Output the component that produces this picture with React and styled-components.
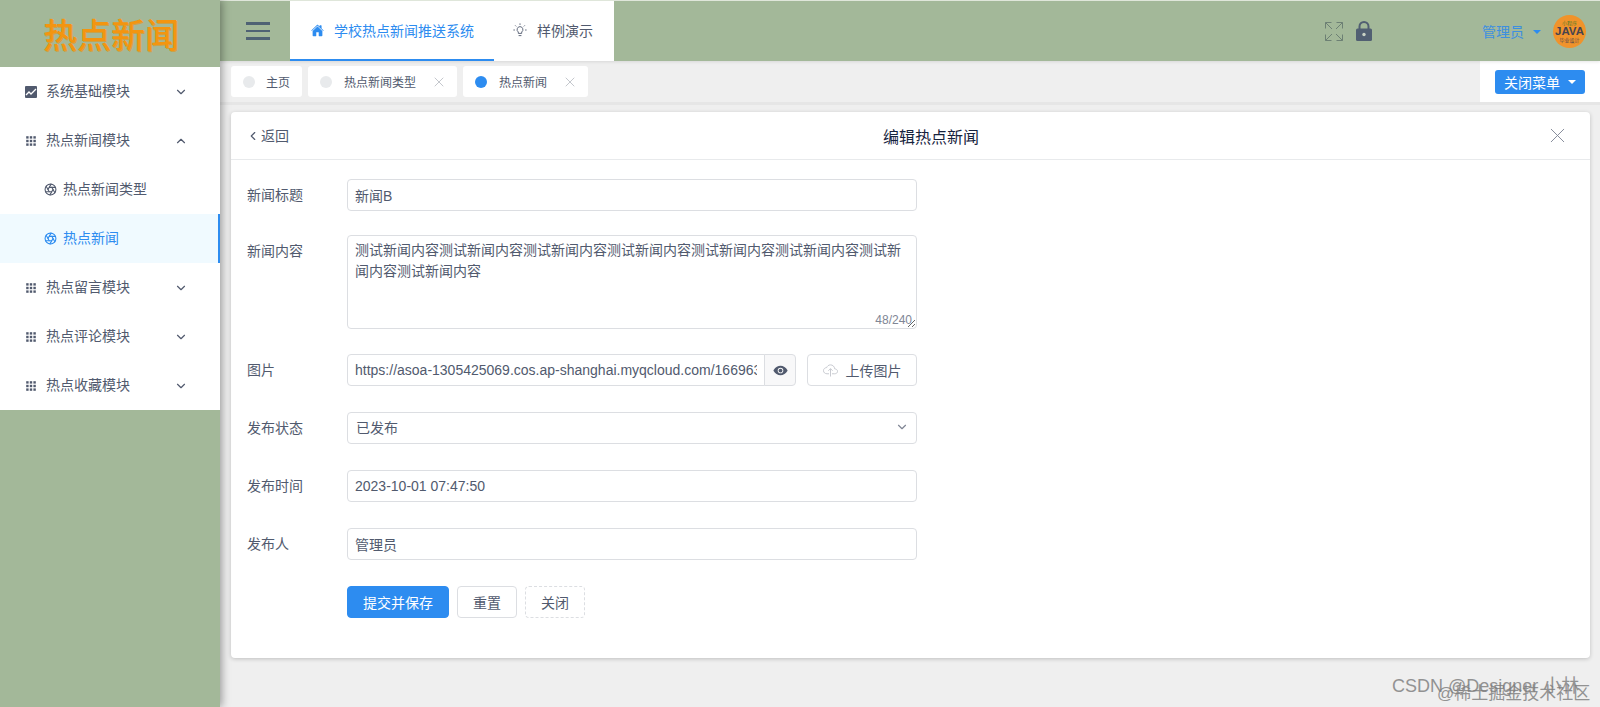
import React from 'react';
import styled, { createGlobalStyle } from 'styled-components';
import { ChevronDown, ChevronUp, ChevronLeft, X, Aperture } from 'lucide-react';
import { IoHome, IoEye, IoCloudUploadOutline } from 'react-icons/io5';

const BLUE = '#2d8cf0';
const GREEN = '#a3b899';
const TEXT = '#515a6e';
const FONT = '"Liberation Sans", "Noto Sans CJK SC", sans-serif';

const Global = createGlobalStyle`
  html, body { margin: 0; padding: 0; height: 707px; overflow: hidden; }
  body { font-family: ${FONT}; font-size: 14px; color: ${TEXT}; background: #efefef; }
  * { box-sizing: border-box; }
`;

const Page = styled.div`
  position: relative;
  display: flex;
  width: 1600px;
  height: 707px;
  overflow: hidden;
`;

const Sidebar = styled.aside`
  width: 220px;
  flex: none;
  background: ${GREEN};
  box-shadow: 2px 0 8px rgba(0, 0, 0, 0.35);
  z-index: 3;
`;

const Logo = styled.div`
  height: 67px;
  display: flex;
  align-items: center;
  justify-content: center;
  padding-left: 2px;
  font-family: "Noto Sans CJK SC", sans-serif;
  font-size: 34px;
  font-weight: 500;
  color: #f39510;
  text-shadow: 1px 1px 0 #c9a24a;
`;

const Menu = styled.nav`
  background: #fff;
`;

const MenuRow = styled.div`
  height: 49px;
  display: flex;
  align-items: center;
  padding-left: ${(p) => (p.$sub ? '44px' : '25px')};
  padding-right: 32px;
  gap: ${(p) => (p.$sub ? '6px' : '9px')};
  color: ${(p) => (p.$active ? BLUE : TEXT)};
  background: ${(p) => (p.$active ? '#f0faff' : '#fff')};
  border-right: ${(p) => (p.$active ? `2px solid ${BLUE}` : 'none')};
`;

const MenuText = styled.span`
  flex: 1;
  line-height: 20px;
  margin-top: -2px;
`;

const Main = styled.main`
  flex: 1;
  min-width: 0;
  display: flex;
  flex-direction: column;
`;

const TopBar = styled.header`
  height: 61px;
  flex: none;
  display: flex;
  background: ${GREEN};
  border-top: 1px solid #dfe6da;
  padding-right: 14px;
  z-index: 2;
  box-shadow: 0 1px 3px rgba(0, 0, 0, 0.1);
`;

const Burger = styled.div`
  width: 70px;
  display: flex;
  flex-direction: column;
  justify-content: center;
  align-items: center;
  gap: 5px;
  padding-left: 6px;
  span {
    display: block;
    width: 24px;
    height: 2.4px;
    background: #4f6274;
  }
`;

const NavTabs = styled.div`
  display: flex;
  height: 60px;
  background: #fff;
`;

const NavTab = styled.div`
  display: flex;
  align-items: center;
  gap: 10px;
  padding: 0 ${(p) => (p.$active ? '20px' : '21px')} 0 ${(p) => (p.$active ? '21px' : '19px')};
  color: ${(p) => (p.$active ? BLUE : TEXT)};
  border-bottom: 2px solid ${(p) => (p.$active ? BLUE : 'transparent')};
`;

const Spacer = styled.div`
  flex: 1;
`;

const TopIcons = styled.div`
  display: flex;
  align-items: center;
  gap: 13px;
  margin-right: 110px;
`;

const User = styled.div`
  display: flex;
  align-items: center;
  color: #3d8fe0;
`;

const Caret = styled.i`
  width: 0;
  height: 0;
  margin-left: ${(p) => p.$gap || '9px'};
  margin-top: 1px;
  border-left: 4px solid transparent;
  border-right: 4px solid transparent;
  border-top: 4px solid ${(p) => p.$color || BLUE};
`;

const Avatar = styled.div`
  width: 33px;
  height: 33px;
  margin-left: 12px;
  border-radius: 50%;
  background: #f0932b;
  color: #46434f;
  display: flex;
  flex-direction: column;
  align-items: center;
  justify-content: center;
  font-size: 11.5px;
  line-height: 11px;
  font-weight: 700;
`;

const AvatarTiny = styled.span`
  font-size: 5px;
  line-height: 6px;
  font-weight: 400;
  color: ${(p) => p.$color || '#46434f'};
`;

const TagBar = styled.div`
  height: 44px;
  flex: none;
  display: flex;
  align-items: flex-start;
  padding: 5px 0 0 11px;
  gap: 6px;
  background: #efefef;
  border-bottom: 3px solid #e6e6e6;
`;

const Tag = styled.div`
  height: 31px;
  display: flex;
  align-items: center;
  padding: 0 ${(p) => (p.$closable ? '10px' : '12px')} 0 12px;
  gap: ${(p) => (p.$closable ? '12px' : '11px')};
  background: #fff;
  font-size: 12px;
  border-radius: 3px;
`;

const Dot = styled.span`
  width: 12px;
  height: 12px;
  border-radius: 50%;
  background: ${(p) => (p.$active ? BLUE : '#e8eaec')};
`;

const TagClose = styled(X)`
  margin-left: 3px;
  color: #b5b9c0;
`;

const CloseMenu = styled.div`
  margin-left: auto;
  margin-top: -5px;
  width: 120px;
  height: 41px;
  background: #fff;
  display: flex;
  align-items: center;
  justify-content: center;
`;

const CloseMenuBtn = styled.div`
  width: 90px;
  height: 24px;
  border-radius: 3px;
  background: ${BLUE};
  color: #fff;
  display: flex;
  align-items: center;
  justify-content: center;
`;

const Card = styled.section`
  height: 546px;
  margin: 7px 10px 0 11px;
  background: #fff;
  border-radius: 4px;
  box-shadow: 0 1px 4px rgba(0, 0, 0, 0.2);
`;

const CardHead = styled.div`
  height: 48px;
  display: flex;
  align-items: center;
  justify-content: space-between;
  padding: 0 20px 0 15px;
  border-bottom: 1px solid #e8eaec;
`;

const Back = styled.div`
  width: 116px;
  display: flex;
  align-items: center;
  gap: 1px;
  line-height: 20px;
`;

const CardTitle = styled.div`
  font-size: 16px;
  color: #17233d;
`;

const CloseBox = styled.div`
  width: 70px;
  display: flex;
  justify-content: flex-end;
  color: #808695;
`;

const Form = styled.form`
  width: 686px;
  padding: 19px 0 0 16px;
  display: flex;
  flex-direction: column;
`;

const Row = styled.div`
  display: flex;
  margin-bottom: ${(p) => p.$mb || '26px'};
`;

const Label = styled.label`
  width: 100px;
  flex: none;
  line-height: 32px;
`;

const Input = styled.input`
  flex: 1;
  min-width: 0;
  height: 32px;
  padding: 0 7px;
  border: 1px solid #dcdee2;
  border-radius: ${(p) => (p.$append ? '4px 0 0 4px' : '4px')};
  font: 14px ${FONT};
  color: ${TEXT};
  outline: none;
`;

const TextWrap = styled.div`
  position: relative;
  flex: 1;
  height: 94px;
`;

const Area = styled.textarea`
  display: block;
  width: 100%;
  height: 94px;
  padding: 4px 7px;
  border: 1px solid #dcdee2;
  border-radius: 4px;
  font: 14px/21px ${FONT};
  color: ${TEXT};
  outline: none;
  resize: vertical;
`;

const Count = styled.span`
  position: absolute;
  right: 5px;
  bottom: 0;
  font-size: 12px;
  line-height: 18px;
  color: #808695;
`;

const EyeBtn = styled.div`
  width: 32px;
  height: 32px;
  flex: none;
  margin-left: -1px;
  background: #f8f8f9;
  border: 1px solid #dcdee2;
  border-radius: 0 4px 4px 0;
  display: flex;
  align-items: center;
  justify-content: center;
  color: #515a6e;
`;

const UploadBtn = styled.div`
  width: 110px;
  height: 32px;
  flex: none;
  margin-left: 11px;
  border: 1px solid #dcdee2;
  border-radius: 4px;
  display: flex;
  align-items: center;
  justify-content: center;
  gap: 8px;
  background: #fff;
`;

const Select = styled.div`
  flex: 1;
  height: 32px;
  padding: 0 7px 2px 8px;
  border: 1px solid #dcdee2;
  border-radius: 4px;
  display: flex;
  align-items: center;
  justify-content: space-between;
`;

const Actions = styled.div`
  display: flex;
  gap: 8px;
  margin-left: 100px;
`;

const Button = styled.div`
  height: 32px;
  padding: 0 15px;
  border-radius: 4px;
  display: flex;
  align-items: center;
  border: 1px ${(p) => (p.$dashed ? 'dashed' : 'solid')} ${(p) => (p.$primary ? BLUE : '#dcdee2')};
  background: ${(p) => (p.$primary ? BLUE : '#fff')};
  color: ${(p) => (p.$primary ? '#fff' : TEXT)};
`;

const Watermark = styled.div`
  position: absolute;
  left: ${(p) => p.$left}px;
  top: ${(p) => p.$top}px;
  font-size: ${(p) => p.$size}px;
  line-height: 20px;
  white-space: nowrap;
  color: #7c7c7c;
  opacity: 0.8;
  z-index: 5;
`;

// small drawings that the icon packages do not have
const GridIcon = () => (
  <svg width="12" height="12" viewBox="-1.5 -1.5 15 15" fill="#515a6e">
    {[0, 4.5, 9].map((y) =>
      [0, 4.5, 9].map((x) => <rect key={`${x}-${y}`} x={x} y={y} width="3" height="3" />)
    )}
  </svg>
);

const ChartIcon = () => (
  <svg width="12" height="12" viewBox="0 0 12 12">
    <rect width="12" height="12" rx="1" fill="#515a6e" />
    <path d="M1 9l3-3 2 2 5-5" fill="none" stroke="#fff" strokeWidth="1.3" />
  </svg>
);

const ExpandIcon = () => (
  <svg width="18" height="19" viewBox="0 0 18 19" fill="none" stroke="#6d8074" strokeWidth="1">
    <path d="M.5 6.5V.5h6M.5.5l6.5 6.5M11.5.5h6v6M17.5.5L11 7M.5 12.5v6h6M.5 18.5L7 12M11.5 18.5h6v-6M17.5 18.5L11 12" />
  </svg>
);

const LockIcon = () => (
  <svg width="16" height="20" viewBox="0 0 16 20">
    <path d="M3.5 9V5.5a4.5 4.5 0 0 1 9 0V9" fill="none" stroke="#515f72" strokeWidth="2" />
    <rect y="7.5" width="16" height="12.5" rx="1.5" fill="#515f72" />
    <circle cx="8" cy="13.5" r="1.7" fill="#c9d2c4" />
  </svg>
);

const BulbIcon = () => (
  <svg width="14" height="14" viewBox="0 0 14 14" fill="none" stroke="#515a6e" strokeWidth="0.9">
    <path d="M7 3.6a3 3 0 0 0-1.7 5.4v1.4h3.4V9A3 3 0 0 0 7 3.6zM5.6 12.6h2.8" />
    <path d="M7 .4v1.5M2.2 2.4l1 1M11.8 2.4l-1 1M.4 7h1.5M12.1 7h1.5" />
  </svg>
);

const Hamburger = () => (
  <Burger>
    <span />
    <span />
    <span />
  </Burger>
);

const MENU = [
  { label: '系统基础模块', icon: <ChartIcon />, chevron: 'down' },
  { label: '热点新闻模块', icon: <GridIcon />, chevron: 'up' },
  { label: '热点新闻类型', sub: true },
  { label: '热点新闻', sub: true, active: true },
  { label: '热点留言模块', icon: <GridIcon />, chevron: 'down' },
  { label: '热点评论模块', icon: <GridIcon />, chevron: 'down' },
  { label: '热点收藏模块', icon: <GridIcon />, chevron: 'down' },
];

export default function App() {
  return (
    <Page>
      <Global />
      <Sidebar>
        <Logo>热点新闻</Logo>
        <Menu>
          {MENU.map((m) => (
            <MenuRow key={m.label} $sub={m.sub} $active={m.active}>
              {m.sub ? <Aperture size={13} strokeWidth={2} /> : m.icon}
              <MenuText>{m.label}</MenuText>
              {m.chevron === 'down' && <ChevronDown size={14} />}
              {m.chevron === 'up' && <ChevronUp size={14} />}
            </MenuRow>
          ))}
        </Menu>
      </Sidebar>

      <Main>
        <TopBar>
          <Hamburger />
          <NavTabs>
            <NavTab $active>
              <IoHome size={13} />
              学校热点新闻推送系统
            </NavTab>
            <NavTab>
              <BulbIcon />
              样例演示
            </NavTab>
          </NavTabs>
          <Spacer />
          <TopIcons>
            <ExpandIcon />
            <LockIcon />
          </TopIcons>
          <User>
            管理员
            <Caret />
            <Avatar>
              <AvatarTiny $color="#4f7a2a">小程序</AvatarTiny>
              JAVA
              <AvatarTiny>毕业设计</AvatarTiny>
            </Avatar>
          </User>
        </TopBar>

        <TagBar>
          <Tag>
            <Dot />
            主页
          </Tag>
          <Tag $closable>
            <Dot />
            热点新闻类型
            <TagClose size={16} strokeWidth={1.2} />
          </Tag>
          <Tag $closable>
            <Dot $active />
            热点新闻
            <TagClose size={16} strokeWidth={1.2} />
          </Tag>
          <CloseMenu>
            <CloseMenuBtn>
              关闭菜单
              <Caret $color="#fff" $gap="8px" />
            </CloseMenuBtn>
          </CloseMenu>
        </TagBar>

        <Card>
          <CardHead>
            <Back>
              <ChevronLeft size={14} />
              返回
            </Back>
            <CardTitle>编辑热点新闻</CardTitle>
            <CloseBox>
              <X size={25} strokeWidth={0.9} />
            </CloseBox>
          </CardHead>

          <Form>
            <Row $mb="24px">
              <Label>新闻标题</Label>
              <Input readOnly value="新闻B" />
            </Row>
            <Row $mb="25px">
              <Label>新闻内容</Label>
              <TextWrap>
                <Area
                  readOnly
                  value="测试新闻内容测试新闻内容测试新闻内容测试新闻内容测试新闻内容测试新闻内容测试新闻内容测试新闻内容"
                />
                <Count>48/240</Count>
              </TextWrap>
            </Row>
            <Row>
              <Label>图片</Label>
              <Input $append readOnly value="https://asoa-1305425069.cos.ap-shanghai.myqcloud.com/1669632345678.jpg" />
              <EyeBtn>
                <IoEye size={15} />
              </EyeBtn>
              <UploadBtn>
                <IoCloudUploadOutline size={15} color="#c5c8ce" />
                上传图片
              </UploadBtn>
            </Row>
            <Row>
              <Label>发布状态</Label>
              <Select>
                已发布
                <ChevronDown size={14} color="#808695" />
              </Select>
            </Row>
            <Row>
              <Label>发布时间</Label>
              <Input readOnly value="2023-10-01 07:47:50" />
            </Row>
            <Row>
              <Label>发布人</Label>
              <Input readOnly value="管理员" />
            </Row>
            <Actions>
              <Button $primary>提交并保存</Button>
              <Button>重置</Button>
              <Button $dashed>关闭</Button>
            </Actions>
          </Form>
        </Card>
      </Main>

      <Watermark $left={1392} $top={676} $size={18}>CSDN @Designer 小林</Watermark>
      <Watermark $left={1437} $top={684} $size={17}>@稀土掘金技术社区</Watermark>
    </Page>
  );
}
